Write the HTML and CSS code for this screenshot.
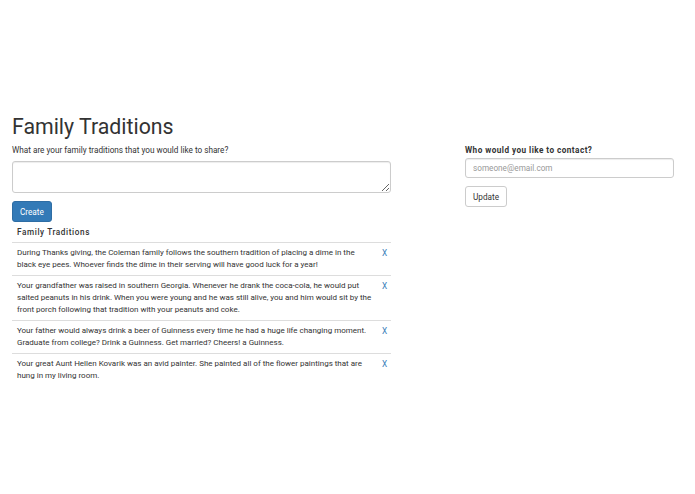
FILE: index.html
```html
<!DOCTYPE html>
<html lang="en">
<head>
    <meta charset="UTF-8">
    <title>Family Traditions</title>
    <link rel="stylesheet" href="styles.css">
</head>
<body>

    <div class="page">

        <!-- Traditions -->
        <div class="traditions">
            <h1>Family Traditions</h1>
            <label class="prompt" for="tradition">What are your family traditions that you would like to share?</label>
            <textarea id="tradition" class="field area"></textarea>
            <button class="btn btn-primary">Create</button>

            <h2 class="list-title">Family Traditions</h2>
            <div class="list">
                <div class="row">
                    <p>During Thanks giving, the Coleman family follows the southern tradition of placing a dime in the black eye pees. Whoever finds the dime in their serving will have good luck for a year!</p>
                    <a href="#" class="remove">X</a>
                </div>
                <div class="row">
                    <p>Your grandfather was raised in southern Georgia. Whenever he drank the coca-cola, he would put salted peanuts in his drink. When you were young and he was still alive, you and him would sit by the front porch following that tradition with your peanuts and coke.</p>
                    <a href="#" class="remove">X</a>
                </div>
                <div class="row">
                    <p>Your father would always drink a beer of Guinness every time he had a huge life changing moment. Graduate from college? Drink a Guinness. Get married? Cheers! a Guinness.</p>
                    <a href="#" class="remove">X</a>
                </div>
                <div class="row">
                    <p>Your great Aunt Hellen Kovarik was an avid painter. She painted all of the flower paintings that are hung in my living room.</p>
                    <a href="#" class="remove">X</a>
                </div>
            </div>
        </div>

        <!-- Contact -->
        <div class="contact">
            <label class="contact-label" for="email">Who would you like to contact?</label>
            <input id="email" class="field" type="text" placeholder="someone@email.com">
            <button class="btn btn-default">Update</button>
        </div>

    </div>

</body>
</html>
```

FILE: styles.css
```css
* {
    margin: 0;
    padding: 0;
    box-sizing: border-box;
    font-family: Roboto, "Liberation Sans", sans-serif;
}

body {
    background: #fff;
    color: #333;
}

.page {
    display: flex;
    align-items: flex-start;
    padding: 113px 21px 0 12px;
}

/* Left column */
.traditions {
    width: 379px;
    display: flex;
    flex-direction: column;
    align-items: flex-start;
}

h1 {
    font-size: 21.3px;
    font-weight: 400;
    line-height: 28px;
    margin-bottom: 3px;
}

.prompt {
    font-size: 8.2px;
    line-height: 12px;
    margin-bottom: 5px;
}

.field {
    width: 100%;
    border: 1px solid #ccc;
    border-radius: 3px;
    box-shadow: inset 0 1px 1px rgba(0, 0, 0, 0.075);
    font-size: 8.2px;
    color: #555;
    padding: 4px 7px;
}

.area {
    height: 32px;
    resize: vertical;
    margin-bottom: 8px;
}

.btn {
    font-size: 8.2px;
    line-height: 12px;
    padding: 3.5px 7px;
    border-radius: 3px;
    border: 1px solid transparent;
}

.btn-primary {
    background: #337ab7;
    border-color: #2e6da4;
    color: #fff;
}

.btn-default {
    background: #fff;
    border-color: #ccc;
    color: #333;
}

.list-title {
    font-size: 8.2px;
    font-weight: 500;
    letter-spacing: 0.6px;
    line-height: 12px;
    padding: 4px 5px 4px;
}

.list {
    width: 100%;
}

.row {
    display: flex;
    border-top: 1px solid #ddd;
    padding: 4px 1px 4px 5px;
}

.row p {
    flex: 1;
    font-size: 8px;
    line-height: 12px;
    padding-right: 10px;
}

.remove {
    color: #337ab7;
    text-decoration: none;
    font-size: 8.2px;
    line-height: 12px;
    width: 8px;
}

/* Right column */
.contact {
    margin-left: auto;
    width: 209px;
    padding-top: 31px;
    display: flex;
    flex-direction: column;
    align-items: flex-start;
}

.contact-label {
    font-size: 8.2px;
    font-weight: 700;
    letter-spacing: 0.45px;
    line-height: 12px;
    margin-bottom: 2px;
}

.contact .field {
    height: 20px;
    margin-bottom: 8px;
}

.contact .field::placeholder {
    color: #999;
}
```
